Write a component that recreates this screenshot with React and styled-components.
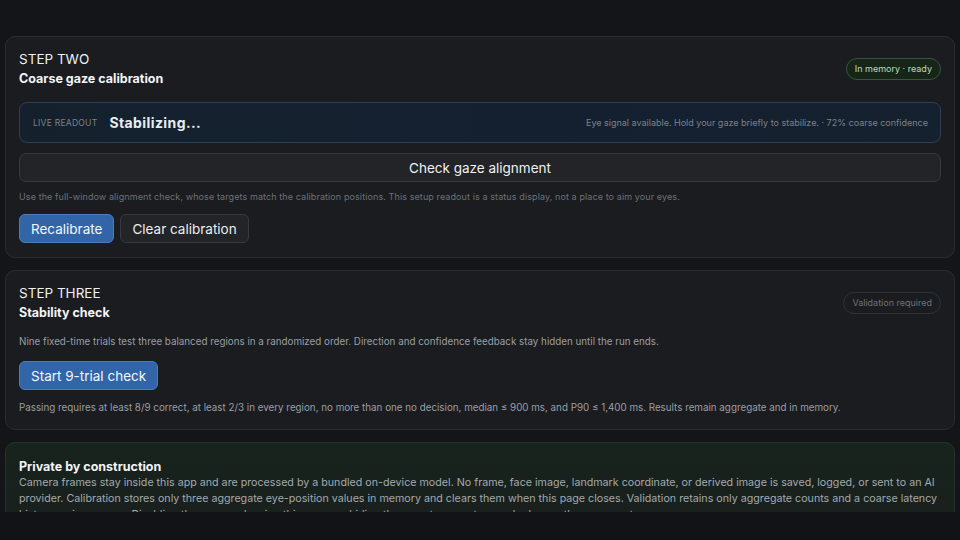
import React from 'react';
import styled, { createGlobalStyle } from 'styled-components';

const GlobalStyle = createGlobalStyle`
    html, body {
        margin: 0;
        padding: 0;
        background-color: #131518;
    }
    body {
        font-family: Inter, "Noto Sans", "Liberation Sans", sans-serif;
        color: #e8eaed;
        -webkit-font-smoothing: antialiased;
    }
`

const Screen = styled.div`
    height: 540px;
    display: flex;
    flex-direction: column;
    overflow: hidden;
`

const Scroller = styled.div`
    height: 512px;
    overflow: hidden;
    padding: 36px 5px 0;
    box-sizing: border-box;
    display: flex;
    flex-direction: column;
    gap: 12px;
`

const BottomBar = styled.div`
    flex: 1;
    background-color: #111316;
`

const Card = styled.section`
    flex-shrink: 0;
    border-radius: 10px;
    border: 1px solid ${p => p.$tone === 'green' ? '#26332b' : '#2a2d31'};
    background: ${p => p.$tone === 'green'
        ? 'linear-gradient(180deg, #17231d 0%, #1a1f1d 100%)'
        : '#1a1c1f'};
    padding: ${p => p.$tone === 'green' ? '13px 13px 14px' : '13px 13px 14px'};
    display: flex;
    flex-direction: column;
`

const CardHead = styled.div`
    display: flex;
    justify-content: space-between;
    align-items: center;
`

const StepLabel = styled.div`
    font-size: 13.5px;
    line-height: 18px;
    text-transform: uppercase;
    color: #eef0f2;
`

const CardTitle = styled.h3`
    margin: 2px 0 0;
    font-size: 12.5px;
    line-height: 17px;
    font-weight: 700;
    color: #f2f4f6;
`

const Badge = styled.span`
    font-size: 9px;
    line-height: 12px;
    padding: 4px 8px;
    border-radius: 999px;
    border: 1px solid ${p => p.$ready ? '#35553d' : '#2f3236'};
    background-color: ${p => p.$ready ? '#172519' : 'transparent'};
    color: ${p => p.$ready ? '#b9dcc0' : '#6e7278'};
`

const Readout = styled.div`
    margin-top: 15px;
    height: 41px;
    box-sizing: border-box;
    border-radius: 8px;
    border: 1px solid #2d4056;
    background: linear-gradient(90deg, #14212d 0%, #142030 60%, #15212e 100%);
    display: flex;
    align-items: center;
    padding: 0 12px 0 13px;
`

const ReadoutLabel = styled.span`
    font-size: 8.6px;
    letter-spacing: 0.2px;
    text-transform: uppercase;
    color: #7b828a;
`

const ReadoutValue = styled.span`
    margin-left: 12px;
    font-size: 14px;
    font-weight: 700;
    letter-spacing: 0.4px;
    color: #e7edf3;
`

const ReadoutNote = styled.span`
    margin-left: auto;
    font-size: 9px;
    color: #7b8289;
`

const WideButton = styled.button`
    margin-top: 10px;
    height: 29px;
    width: 100%;
    border-radius: 7px;
    border: 1px solid #36393d;
    background-color: #222427;
    color: #f0f2f4;
    font-family: inherit;
    font-size: 13.5px;
`

const Hint = styled.p`
    margin: ${p => p.$top || '10px'} 0 0;
    font-size: ${p => p.$small ? '9px' : '9.8px'};
    letter-spacing: ${p => p.$small ? '0.1px' : '0'};
    line-height: 14px;
    color: ${p => p.$small ? '#6c7177' : '#9a9fa5'};
`

const ButtonRow = styled.div`
    margin-top: ${p => p.$top || '10px'};
    display: flex;
    gap: 6px;
`

const ActionButton = styled.button`
    height: 29px;
    padding: 0 11px;
    border-radius: 6px;
    font-family: inherit;
    font-size: 13.5px;
    color: ${p => p.$primary ? '#f3f7fc' : '#eceef0'};
    border: 1px solid ${p => p.$primary ? '#4b7dbd' : '#36393d'};
    background-color: ${p => p.$primary ? '#3265a7' : '#222427'};
`

const PrivacyText = styled.p`
    margin: 0;
    font-size: 10.7px;
    line-height: 16px;
    color: #a3a9ae;
`

function StepCard({ step, title, badge, ready, children }) {
    return (
        <Card>
            <CardHead>
                <div>
                    <StepLabel>{step}</StepLabel>
                    <CardTitle>{title}</CardTitle>
                </div>
                <Badge $ready={ready}>{badge}</Badge>
            </CardHead>
            {children}
        </Card>
    )
}

export default function App() {
    return (
        <>
        <GlobalStyle />
        <Screen>
            <Scroller>
                <StepCard step="Step two" title="Coarse gaze calibration" badge="In memory · ready" ready>
                    <Readout>
                        <ReadoutLabel>Live readout</ReadoutLabel>
                        <ReadoutValue>Stabilizing...</ReadoutValue>
                        <ReadoutNote>Eye signal available. Hold your gaze briefly to stabilize. · 72% coarse confidence</ReadoutNote>
                    </Readout>
                    <WideButton>Check gaze alignment</WideButton>
                    <Hint $small $top="8px">
                        Use the full-window alignment check, whose targets match the calibration positions. This setup readout is a status display, not a place to aim your eyes.
                    </Hint>
                    <ButtonRow>
                        <ActionButton $primary>Recalibrate</ActionButton>
                        <ActionButton>Clear calibration</ActionButton>
                    </ButtonRow>
                </StepCard>

                <StepCard step="Step three" title="Stability check" badge="Validation required">
                    <Hint $top="14px">
                        Nine fixed-time trials test three balanced regions in a randomized order. Direction and confidence feedback stay hidden until the run ends.
                    </Hint>
                    <ButtonRow $top="12px">
                        <ActionButton $primary>Start 9-trial check</ActionButton>
                    </ButtonRow>
                    <Hint $top="11px">
                        Passing requires at least 8/9 correct, at least 2/3 in every region, no more than one no decision, median ≤ 900 ms, and P90 ≤ 1,400 ms. Results remain aggregate and in memory.
                    </Hint>
                </StepCard>

                <Card $tone="green">
                    <CardTitle>Private by construction</CardTitle>
                    <PrivacyText>
                        Camera frames stay inside this app and are processed by a bundled on-device model. No frame, face image, landmark coordinate, or derived image is saved, logged, or sent to an AI provider. Calibration stores only three aggregate eye-position values in memory and clears them when this page closes. Validation retains only aggregate counts and a coarse latency histogram in memory. Disabling the camera, leaving this page, or hiding the app stops capture and releases the camera at once.
                    </PrivacyText>
                </Card>
            </Scroller>
            <BottomBar />
        </Screen>
        </>
    )
}
